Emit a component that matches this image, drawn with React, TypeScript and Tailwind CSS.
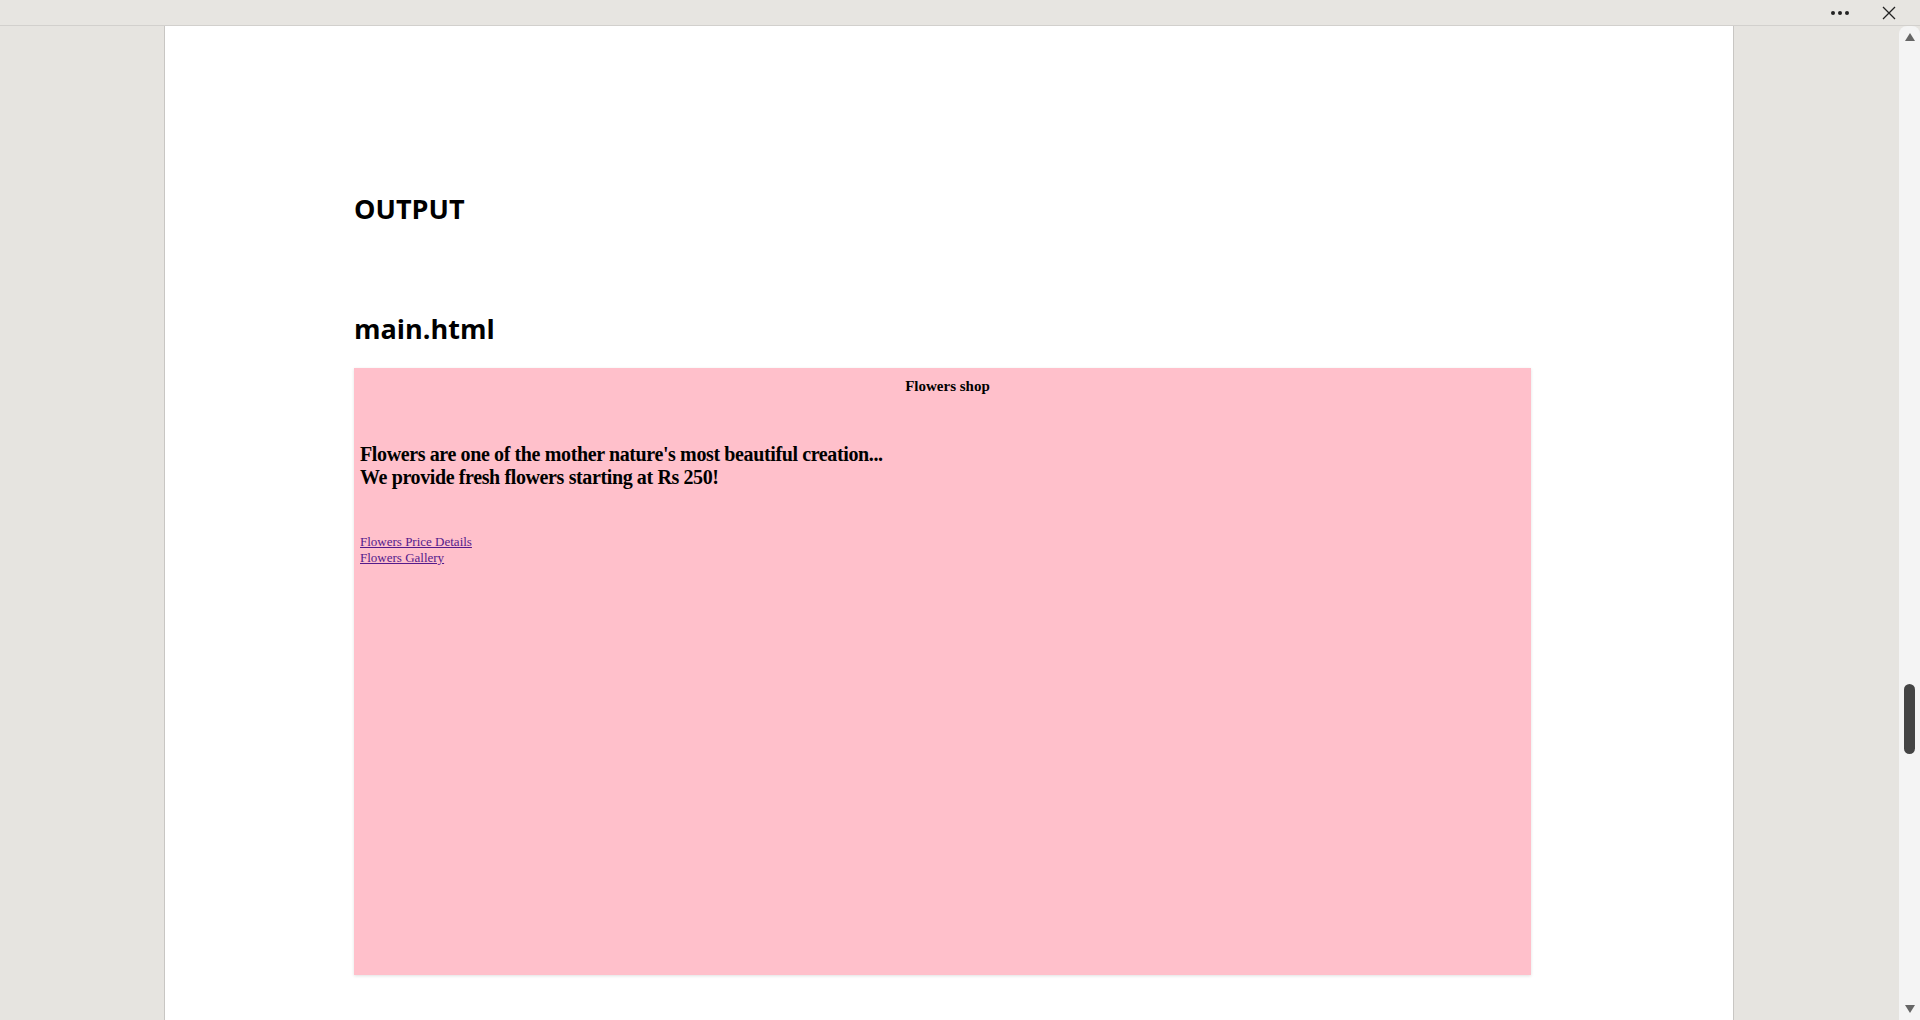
export default function App() {
  return (
    <div className="flex h-[1020px] w-[1920px] flex-col overflow-hidden bg-[#e6e4e0]">
      {/* window top bar */}
      <div className="flex h-[26px] shrink-0 items-center justify-end border-b border-[#d2d0cd] bg-[#e7e5e1]">
        <svg width="20" height="6" viewBox="0 0 20 6" className="mr-[32px]">
          <circle cx="3" cy="3" r="2" fill="#222" />
          <circle cx="10" cy="3" r="2" fill="#222" />
          <circle cx="17" cy="3" r="2" fill="#222" />
        </svg>
        <svg width="14" height="14" viewBox="0 0 14 14" className="mr-[24px]">
          <path d="M1 1L13 13M13 1L1 13" stroke="#222" strokeWidth="1.3" />
        </svg>
      </div>

      <div className="flex min-h-0 flex-1">
        <div className="w-[165px] shrink-0 border-r border-[#c8c6c3]" />

        {/* document page */}
        <div className="w-[1569px] shrink-0 border-r border-[#c8c6c3] bg-white pl-[189px] pt-[163px]">
          <h1 className="font-['Open_Sans',sans-serif] text-[27px] font-bold leading-[40px] text-black">OUTPUT</h1>
          <h2 className="mt-[80px] font-['Open_Sans',sans-serif] text-[27px] font-bold leading-[40px] text-black">main.html</h2>

          <div className="mt-[19px] h-[607px] w-[1177px] bg-[#ffc0cb] px-[6px] pt-[9px] font-['Liberation_Serif',serif] text-black shadow-[0_1px_3px_rgba(0,0,0,0.12)]">
            <p className="pl-[10px] text-center text-[15px] font-bold leading-[18px]">Flowers shop</p>
            <p className="mt-[48px] text-[20px] font-bold leading-[23px] tracking-[-0.38px]">
              Flowers are one of the mother nature's most beautiful creation...
              <br />
              We provide fresh flowers starting at Rs 250!
            </p>
            <div className="mt-[45px] flex flex-col text-[13px] leading-[16px]">
              <a href="#" className="w-fit text-[#551a8b] underline">Flowers Price Details</a>
              <a href="#" className="w-fit text-[#551a8b] underline">Flowers Gallery</a>
            </div>
          </div>
        </div>

        <div className="flex-1" />

        {/* scrollbar */}
        <div className="relative w-[21px] shrink-0 rounded-t-[8px] bg-[#f4f4f4]">
          <svg width="10" height="8" viewBox="0 0 10 8" className="absolute left-[6px] top-[7px]">
            <path d="M5 0L10 8H0Z" fill="#666" />
          </svg>
          <div className="absolute left-[5px] top-[658px] h-[70px] w-[11px] rounded-full bg-[#444]" />
          <svg width="10" height="8" viewBox="0 0 10 8" className="absolute bottom-[7px] left-[6px]">
            <path d="M0 0H10L5 8Z" fill="#666" />
          </svg>
        </div>
      </div>
    </div>
  );
}
